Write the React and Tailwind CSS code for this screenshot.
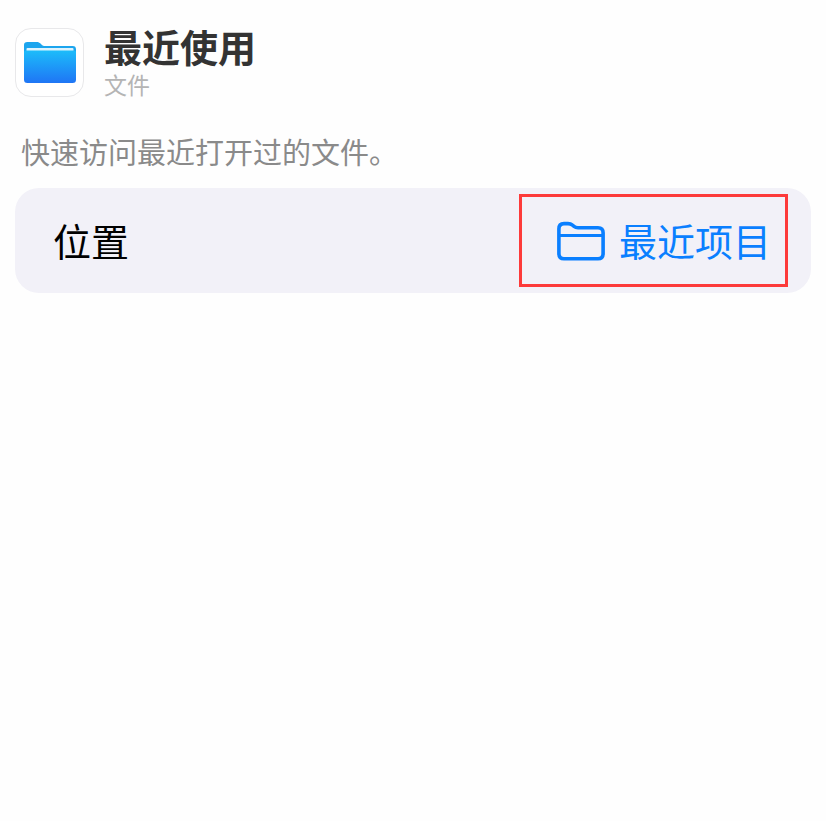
import React from "react";

const FilesAppIcon = () => (
  <svg viewBox="0 0 52 42" className="w-[52px] h-[42px]" aria-hidden="true">
    <defs>
      <linearGradient id="folderFront" x1="0" y1="0" x2="0" y2="1">
        <stop offset="0" stopColor="#1cbcfa" />
        <stop offset="1" stopColor="#1f75f5" />
      </linearGradient>
    </defs>
    <path
      d="M0 3C0 1 1 0 3.500 0H12.500C14.500 0 15.500 0.600 16.500 1.600L18 3C18.800 3.700 19.500 4 21 4H48.500C51 4 52 5 52 7.500V14H0Z"
      fill="#1ca5ee"
    />
    <rect x="2.500" y="6" width="47" height="4" rx="1" fill="#dff3fd" />
    <path
      d="M0 10.500C0 9 1 8.600 3 8.600H49C51 8.600 52 9 52 10.500V37.500C52 40 51 41 48.500 41H3.500C1 41 0 40 0 37.500Z"
      fill="url(#folderFront)"
    />
  </svg>
);

const FolderIcon = () => (
  <svg
    viewBox="0 0 48 40"
    className="w-12 h-10"
    fill="none"
    stroke="currentColor"
    strokeLinejoin="round"
    aria-hidden="true"
  >
    <path
      strokeWidth="3.600"
      d="M1.900 8C1.900 4 3.500 2.600 7 2.600H11C13 2.600 14.200 3.100 15.500 4.200L17 5.400C18.200 6.400 19.200 6.700 21 6.700H41C44.500 6.700 46.100 8.300 46.100 11.800V32.500C46.100 36.300 44.500 37.800 41 37.800H7C3.500 37.800 1.900 36.300 1.900 32.500Z"
    />
    <path strokeWidth="3" d="M1.900 14.500H46.100" />
  </svg>
);

const App = () => {
  return (
    <main className="min-h-screen bg-[#fefefe] px-[15px] pt-7 font-['Liberation_Sans','Noto_Sans_CJK_SC',sans-serif]">
      {/* Header */}
      <header className="flex items-start gap-5">
        <div className="flex size-[69px] shrink-0 items-center justify-center rounded-2xl border border-[#e8e8ea] bg-white">
          <FilesAppIcon />
        </div>
        <div>
          <h1 className="text-[38px] leading-[42px] font-bold text-[#333333]">最近使用</h1>
          <p className="text-[23px] leading-8 text-[#b4b4b4]">文件</p>
        </div>
      </header>

      {/* Description */}
      <p className="mt-8 px-1.5 text-[29px] leading-10 text-[#8a8a8a]">
        快速访问最近打开过的文件。
      </p>

      {/* Location setting */}
      <section className="mt-3.5 flex items-center justify-between rounded-3xl bg-[#f2f1f8] py-1.5 pr-[23px] pl-[38px]">
        <span id="location-label" className="pt-1 text-[38px] leading-12 text-black">
          位置
        </span>
        <button
          type="button"
          aria-describedby="location-label"
          className="flex h-[93px] items-center gap-3.5 border-3 border-[#fd3a3a] pr-3.5 pl-[35px] text-[38px] leading-12 text-[#0a7fff]"
        >
          <FolderIcon />
          <span className="pt-1">最近项目</span>
        </button>
      </section>
    </main>
  );
};

export default App;
